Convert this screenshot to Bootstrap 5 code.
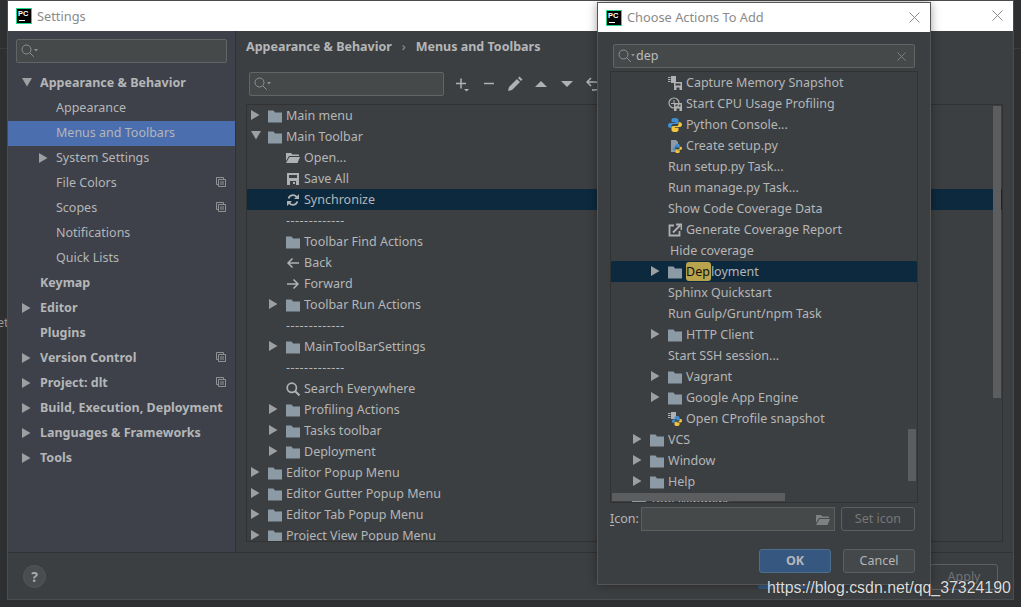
<!DOCTYPE html>
<html lang="en">
<head>
<meta charset="UTF-8">
<title>Settings</title>
<link href="https://cdn.jsdelivr.net/npm/bootstrap@5.3.0/dist/css/bootstrap.min.css" rel="stylesheet">
<style>
body { width: 1021px; height: 607px; overflow: hidden; background: #2e2f30; color: #b4b6b8; font: 12.5px/1 "Noto Sans", sans-serif; position: relative; }
svg { display: block; flex: none; }
.desk-line { height: 1px; background: #3a3b3c; }
.desk-text { position: absolute; left: -3px; top: 317px; color: #999; }
.win { position: absolute; background: #3c3f41; box-shadow: 0 0 0 1px #4a4c4e; }
.win-settings { left: 8px; top: 1px; width: 1005px; height: 598px; }
.win-dialog { left: 598px; top: 3px; width: 332px; height: 581px; box-shadow: 0 0 0 1px #555, 0 0 10px rgba(0,0,0,.45); }
.titlebar { background: #fff; color: #8a8a8a; font-size: 12.8px; }
.titlebar-s { height: 30px; padding-left: 8px; }
.titlebar-d { height: 29px; padding-left: 8px; }
.pc-logo { width: 16px; height: 16px; background: #000; border: 1px solid #21d789; color: #fff; font: bold 7.5px/8px "Liberation Sans", sans-serif; padding: 1px 0 0 1px; position: relative; margin-right: 5px; flex: none; }
.pc-logo::after { content: ""; position: absolute; left: 2px; bottom: 2px; width: 6px; height: 1px; background: #fff; }
.win-x { position: absolute; top: 9px; }
.side { width: 228px; background: #3e4149; border-right: 1px solid #323232; padding-top: 8px; flex: none; }
.side-search { margin: 0 8px 8px; height: 24px; }
.field { background: #45494a; border: 1px solid #646464; border-radius: 2px; padding-left: 4px; }
.side-row { height: 25px; position: relative; white-space: nowrap; }
.side-row.on { background: #4b6eaf; }
.side-row b { font-weight: 700; }
.lvl0 { padding-left: 32px; }
.lvl1 { padding-left: 48px; }
.side-row .arrow { position: absolute; left: 14px; top: 7px; }
.side-row.lvl1 .arrow { left: 31px; }
.side-copy { position: absolute; right: 9px; top: 6px; }
.panel { flex: 1; min-width: 0; position: relative; }
.crumb { height: 41px; padding: 10px 0 0 10px; font-weight: 700; }
.crumb i { font-style: normal; font-weight: 400; margin: 0 10px; color: #999; }
.tools { height: 32px; margin-left: 13px; }
.tool-search { width: 195px; height: 24px; margin-right: 6px; }
.tool-btn { width: 26px; display: flex; justify-content: center; }
.tree { border: 1px solid #323232; overflow: hidden; position: relative; }
.tree-main { margin: 0 10px 0 10px; height: 438px; }
.tree-row { height: 21px; position: relative; white-space: nowrap; padding-top: 2px; }
.tree-row.on { background: #0d293e; }
.t0, .t1, .t2 { display: flex; align-items: center; }
.tree-main .t0 { padding-left: 21px; }
.tree-main .t1 { padding-left: 39px; }
.tree-row svg.ic { margin: -2px 4px 0 0; width: 14px; height: 14px; }
.tree-row .arrow { position: absolute; top: 5px; }
.tree-main .t0 .arrow { left: 4px; }
.tree-main .t1 .arrow { left: 22px; }
.tree-list .t0 { padding-left: 21px; }
.tree-list .t1 { padding-left: 39px; }
.tree-list .t2 { padding-left: 57px; }
.tree-list .t1 .arrow { left: 22px; }
.tree-list .t0 .arrow { left: 4px; }
.tree-list .t2 .arrow { left: 40px; }
.tree-list .hide-txt { margin-left: 2px; }
.hit { background: #b9a34d; color: #111; border-radius: 3px; padding: 1px 1px 1px 0; }
.sep { letter-spacing: .5px; }
.thumb { position: absolute; background: #5b5d5f; }
.thumb-main { right: 1px; top: 1px; width: 8px; height: 292px; }
.foot { height: 47px; border-top: 1px solid #323232; position: relative; }
.help { position: absolute; left: 15px; top: 12px; width: 23px; height: 23px; border-radius: 50%; background: #4a4d4f; border: 1px solid #555; color: #aaa; font-weight: 700; font-size: 14px; }
.btn-idea { border: 1px solid #5e6060; border-radius: 3px; background: #3c3f41; color: #b4b6b8; font-size: 12.5px; padding-top: 1px; }
.apply { position: absolute; left: 922px; top: 11px; width: 68px; height: 26px; color: #6f7274; }
.ok-under { position: absolute; left: 750px; top: 32px; width: 72px; height: 4px; background: #365880; border-radius: 3px; }
.dlg-search { margin: 12px 15px 3px; height: 24px; position: relative; color: #bbb; }
.dlg-search .glass { margin-right: 1px; }
.tree-list { margin: 0 12px 0 12px; height: 432px; }
.thumb-v { right: 1px; top: 357px; width: 8px; height: 52px; }
.thumb-h { left: 1px; top: 421px; width: 173px; height: 8px; }
.icon-row { margin: 4px 15px 0 12px; height: 24px; }
.icon-lbl u { text-underline-offset: 2px; }
.icon-field { width: 194px; height: 24px; margin: 0 6px 0 2px; background: #45494a; border: 1px solid #5e6060; position: relative; }
.icon-field svg { position: absolute; right: 4px; top: 5px; opacity: .55; }
.set-icon { width: 74px; height: 24px; color: #777; }
.dlg-btns { margin: 18px 15px 0 0; gap: 12px; }
.dlg-btns .btn-idea { width: 72px; height: 24px; }
.btn-ok { background: #365880; border-color: #4c708c; font-weight: 700; }
.btn-cancel { background: #45484a; }
.watermark { position: absolute; left: 767px; top: 579px; color: #dcdcdc; font: 15.9px/18px "Liberation Sans", sans-serif; text-shadow: 0 0 1px #222; white-space: nowrap; }
</style>
</head>
<body>
<svg width="0" height="0" class="position-absolute">
  <symbol id="i-arrow-r" viewBox="0 0 9 10"><path d="M0 0l8.500 5L0 10z" fill="#9da0a2"/></symbol>
  <symbol id="i-arrow-d" viewBox="0 0 10 9"><path d="M0 0h10L5 8.500z" fill="#9da0a2"/></symbol>
  <symbol id="i-folder" viewBox="0 0 14 14"><path d="M0 1.500h5.500l1.500 2h7v10H0z" fill="#8c9aa5"/></symbol>
  <symbol id="i-open" viewBox="0 0 14 14"><path d="M0 2h5l1.500 1.500H13V5H3L0 10z" fill="#afb1b3"/><path d="M3.500 6H14l-2.500 6H0z" fill="#afb1b3"/></symbol>
  <symbol id="i-save" viewBox="0 0 14 14"><path fill-rule="evenodd" d="M1 1h12v12H1zM3 3v3h8V3zM4 9v4h6V9zM7 10h2v2H7z" fill="#afb1b3"/></symbol>
  <symbol id="i-sync" viewBox="0 0 14 14"><path d="M2.600 5.500A4.600 4.600 0 0 1 11 4.500M11.400 8.500A4.600 4.600 0 0 1 3 9.500" fill="none" stroke="#afb1b3" stroke-width="1.800"/><path d="M13 1v5H8zM1 13V8h5z" fill="#afb1b3"/></symbol>
  <symbol id="i-back" viewBox="0 0 14 14"><path d="M13 7H2M6.500 2.500L2 7l4.500 4.500" fill="none" stroke="#afb1b3" stroke-width="1.500"/></symbol>
  <symbol id="i-fwd" viewBox="0 0 14 14"><path d="M1 7h11M7.500 2.500L12 7l-4.500 4.500" fill="none" stroke="#afb1b3" stroke-width="1.500"/></symbol>
  <symbol id="i-find" viewBox="0 0 14 14"><circle cx="5.800" cy="5.800" r="4.600" fill="none" stroke="#afb1b3" stroke-width="1.700"/><path d="M9 9l4.500 4.500" stroke="#afb1b3" stroke-width="2"/></symbol>
  <symbol id="i-search" viewBox="0 0 17 14"><circle cx="5.500" cy="5.500" r="4.500" fill="none" stroke="#8f9294"/><path d="M8.800 8.800l4 4" stroke="#8f9294"/><path d="M13 5h4l-2 2.500z" fill="#8f9294"/></symbol>
  <symbol id="i-copy" viewBox="0 0 10 10"><path d="M0.500 0.500h7v2M0.500 0.500v7h2" fill="none" stroke="#8f9294"/><path d="M2.500 2.500h7v7h-7zM4 5h4M4 7h4" fill="none" stroke="#8f9294"/></symbol>
  <symbol id="i-close" viewBox="0 0 11 11"><path d="M.5.500l10 10M10.500.500l-10 10" stroke="#8a8a8a"/></symbol>
  <symbol id="i-py" viewBox="0 0 10 10"><path d="M5 0C2.500 0 2.500 1 2.500 2v1h2.700v.5H1.500C.5 3.500 0 4.300 0 5.300c0 1 .5 1.700 1.500 1.700h1V5.800c0-.9.700-1.500 1.500-1.500h2.200c.7 0 1.300-.6 1.300-1.300V1.500C7.500.5 6.500 0 5 0z" fill="#3f8fd2"/><path d="M5 10c2.500 0 2.500-1 2.500-2V7H4.800v-.5h3.700c1 0 1.500-.8 1.500-1.800 0-1-.5-1.700-1.500-1.700h-1v1.200c0 .9-.7 1.500-1.500 1.500H3.800c-.7 0-1.300.6-1.300 1.300v1.500C2.500 9.500 3.500 10 5 10z" fill="#f2c53d"/></symbol>
  <symbol id="i-floppy" viewBox="0 0 8 8"><path fill-rule="evenodd" d="M0 0h8v8H0zM1.500 1.500v2h5v-2zM2.500 5.500V8h3V5.500z" fill="#afb1b3"/></symbol>
  <symbol id="i-chip" viewBox="0 0 10 9"><path d="M3 0h5v7H3zM0 1h2.500v1H0zM0 3h2.500v1H0zM0 5h2.500v1H0z" fill="#afb1b3"/></symbol>
  <symbol id="i-report" viewBox="0 0 14 14"><path d="M6 2.500H1.500v10h10V8" fill="none" stroke="#afb1b3" stroke-width="1.800"/><path d="M5 9.500L12 2.500M8 1.500h5.500V7" fill="none" stroke="#afb1b3" stroke-width="1.800"/></symbol>
</svg>

<div class="desk-line mt-5"></div>
<div class="desk-text">et</div>

<!-- Settings window -->
<div class="win win-settings d-flex flex-column">
  <div class="titlebar titlebar-s d-flex align-items-center">
    <div class="pc-logo">PC</div>Settings
    <svg class="win-x" style="left:984px" width="11" height="11"><use href="#i-close"/></svg>
  </div>
  <div class="d-flex flex-grow-1">
    <div class="side">
      <div class="field side-search d-flex align-items-center"><svg width="17" height="14"><use href="#i-search"/></svg></div>
      <div class="side-row lvl0 d-flex align-items-center"><svg class="arrow" width="10" height="9"><use href="#i-arrow-d"/></svg><b>Appearance &amp; Behavior</b></div>
      <div class="side-row lvl1 d-flex align-items-center">Appearance</div>
      <div class="side-row lvl1 d-flex align-items-center on">Menus and Toolbars</div>
      <div class="side-row lvl1 d-flex align-items-center"><svg class="arrow" width="9" height="10"><use href="#i-arrow-r"/></svg>System Settings</div>
      <div class="side-row lvl1 d-flex align-items-center">File Colors<svg class="side-copy" width="10" height="10"><use href="#i-copy"/></svg></div>
      <div class="side-row lvl1 d-flex align-items-center">Scopes<svg class="side-copy" width="10" height="10"><use href="#i-copy"/></svg></div>
      <div class="side-row lvl1 d-flex align-items-center">Notifications</div>
      <div class="side-row lvl1 d-flex align-items-center">Quick Lists</div>
      <div class="side-row lvl0 d-flex align-items-center"><b>Keymap</b></div>
      <div class="side-row lvl0 d-flex align-items-center"><svg class="arrow" width="9" height="10"><use href="#i-arrow-r"/></svg><b>Editor</b></div>
      <div class="side-row lvl0 d-flex align-items-center"><b>Plugins</b></div>
      <div class="side-row lvl0 d-flex align-items-center"><svg class="arrow" width="9" height="10"><use href="#i-arrow-r"/></svg><b>Version Control</b><svg class="side-copy" width="10" height="10"><use href="#i-copy"/></svg></div>
      <div class="side-row lvl0 d-flex align-items-center"><svg class="arrow" width="9" height="10"><use href="#i-arrow-r"/></svg><b>Project: dlt</b><svg class="side-copy" width="10" height="10"><use href="#i-copy"/></svg></div>
      <div class="side-row lvl0 d-flex align-items-center"><svg class="arrow" width="9" height="10"><use href="#i-arrow-r"/></svg><b>Build, Execution, Deployment</b></div>
      <div class="side-row lvl0 d-flex align-items-center"><svg class="arrow" width="9" height="10"><use href="#i-arrow-r"/></svg><b>Languages &amp; Frameworks</b></div>
      <div class="side-row lvl0 d-flex align-items-center"><svg class="arrow" width="9" height="10"><use href="#i-arrow-r"/></svg><b>Tools</b></div>
    </div>
    <div class="panel">
      <div class="crumb">Appearance &amp; Behavior<i>›</i>Menus and Toolbars</div>
      <div class="tools d-flex align-items-start">
        <div class="field tool-search d-flex align-items-center"><svg width="17" height="14"><use href="#i-search"/></svg></div>
        <div class="tool-btn pt-1"><svg width="16" height="16" viewBox="0 0 16 16"><path d="M1 7.500h10M6 2.500v10" stroke="#afb1b3" stroke-width="1.500"/><path d="M9 13h5l-2.500 2.500z" fill="#afb1b3"/></svg></div>
        <div class="tool-btn pt-1"><svg width="14" height="16" viewBox="0 0 14 16"><path d="M2 7.500h10" stroke="#afb1b3" stroke-width="1.500"/></svg></div>
        <div class="tool-btn pt-1"><svg width="16" height="16" viewBox="0 0 16 16"><path d="M1 15l1-4 8-8 3 3-8 8zM11 2l1.500-1.500 3 3L14 5z" fill="#afb1b3"/></svg></div>
        <div class="tool-btn pt-1"><svg width="14" height="16" viewBox="0 0 14 16"><path d="M1 11l6-6 6 6z" fill="#afb1b3"/></svg></div>
        <div class="tool-btn pt-1"><svg width="14" height="16" viewBox="0 0 14 16"><path d="M1 5l6 6 6-6z" fill="#afb1b3"/></svg></div>
        <div class="tool-btn pt-1"><svg width="14" height="16" viewBox="0 0 14 16"><path d="M5 2L1 6l4 4M1 6h8a4 4 0 0 1 0 8H6" fill="none" stroke="#afb1b3" stroke-width="1.500"/></svg></div>
      </div>
      <div class="tree tree-main">
        <div class="tree-row t0"><svg class="arrow" width="9" height="10"><use href="#i-arrow-r"/></svg><svg class="ic"><use href="#i-folder"/></svg>Main menu</div>
        <div class="tree-row t0"><svg class="arrow" width="10" height="9"><use href="#i-arrow-d"/></svg><svg class="ic"><use href="#i-folder"/></svg>Main Toolbar</div>
        <div class="tree-row t1"><svg class="ic"><use href="#i-open"/></svg>Open...</div>
        <div class="tree-row t1"><svg class="ic"><use href="#i-save"/></svg>Save All</div>
        <div class="tree-row t1 on"><svg class="ic"><use href="#i-sync"/></svg>Synchronize</div>
        <div class="tree-row t1 sep">-------------</div>
        <div class="tree-row t1"><svg class="ic"><use href="#i-folder"/></svg>Toolbar Find Actions</div>
        <div class="tree-row t1"><svg class="ic"><use href="#i-back"/></svg>Back</div>
        <div class="tree-row t1"><svg class="ic"><use href="#i-fwd"/></svg>Forward</div>
        <div class="tree-row t1"><svg class="arrow" width="9" height="10"><use href="#i-arrow-r"/></svg><svg class="ic"><use href="#i-folder"/></svg>Toolbar Run Actions</div>
        <div class="tree-row t1 sep">-------------</div>
        <div class="tree-row t1"><svg class="arrow" width="9" height="10"><use href="#i-arrow-r"/></svg><svg class="ic"><use href="#i-folder"/></svg>MainToolBarSettings</div>
        <div class="tree-row t1 sep">-------------</div>
        <div class="tree-row t1"><svg class="ic"><use href="#i-find"/></svg>Search Everywhere</div>
        <div class="tree-row t1"><svg class="arrow" width="9" height="10"><use href="#i-arrow-r"/></svg><svg class="ic"><use href="#i-folder"/></svg>Profiling Actions</div>
        <div class="tree-row t1"><svg class="arrow" width="9" height="10"><use href="#i-arrow-r"/></svg><svg class="ic"><use href="#i-folder"/></svg>Tasks toolbar</div>
        <div class="tree-row t1"><svg class="arrow" width="9" height="10"><use href="#i-arrow-r"/></svg><svg class="ic"><use href="#i-folder"/></svg>Deployment</div>
        <div class="tree-row t0"><svg class="arrow" width="9" height="10"><use href="#i-arrow-r"/></svg><svg class="ic"><use href="#i-folder"/></svg>Editor Popup Menu</div>
        <div class="tree-row t0"><svg class="arrow" width="9" height="10"><use href="#i-arrow-r"/></svg><svg class="ic"><use href="#i-folder"/></svg>Editor Gutter Popup Menu</div>
        <div class="tree-row t0"><svg class="arrow" width="9" height="10"><use href="#i-arrow-r"/></svg><svg class="ic"><use href="#i-folder"/></svg>Editor Tab Popup Menu</div>
        <div class="tree-row t0"><svg class="arrow" width="9" height="10"><use href="#i-arrow-r"/></svg><svg class="ic"><use href="#i-folder"/></svg>Project View Popup Menu</div>
        <div class="thumb thumb-main"></div>
      </div>
    </div>
  </div>
  <div class="foot">
    <div class="help d-flex align-items-center justify-content-center">?</div>
    <div class="ok-under"></div>
    <div class="btn-idea apply d-flex align-items-center justify-content-center">Apply</div>
  </div>
</div>

<!-- Choose Actions dialog -->
<div class="win win-dialog d-flex flex-column">
  <div class="titlebar titlebar-d d-flex align-items-center">
    <div class="pc-logo">PC</div>Choose Actions To Add
    <svg class="win-x" style="left:311px" width="11" height="11"><use href="#i-close"/></svg>
  </div>
  <div class="field dlg-search d-flex align-items-center"><svg class="glass" width="17" height="14"><use href="#i-search"/></svg>dep
    <svg class="position-absolute" style="right:8px;top:7px" width="9" height="9" viewBox="0 0 11 11"><use href="#i-close"/></svg>
  </div>
  <div class="tree tree-list">
    <div class="tree-row t2"><svg class="ic" viewBox="0 0 14 14"><use href="#i-chip" width="10" height="9" x="0"/><use href="#i-floppy" width="8" height="8" x="6" y="6"/></svg>Capture Memory Snapshot</div>
    <div class="tree-row t2"><svg class="ic" viewBox="0 0 14 14"><circle cx="6" cy="6" r="5" fill="none" stroke="#afb1b3" stroke-width="1.200"/><path d="M6 3v3.500H3" fill="none" stroke="#afb1b3"/><use href="#i-floppy" width="8" height="8" x="6" y="6"/></svg>Start CPU Usage Profiling</div>
    <div class="tree-row t2"><svg class="ic"><use href="#i-py"/></svg>Python Console...</div>
    <div class="tree-row t2"><svg class="ic" viewBox="0 0 14 14"><path d="M3 1h5l2 2v4H7v6H3z" fill="#8c9aa5"/><use href="#i-py" width="9" height="9" x="5" y="5"/></svg>Create setup.py</div>
    <div class="tree-row t2">Run setup.py Task...</div>
    <div class="tree-row t2">Run manage.py Task...</div>
    <div class="tree-row t2">Show Code Coverage Data</div>
    <div class="tree-row t2"><svg class="ic"><use href="#i-report"/></svg>Generate Coverage Report</div>
    <div class="tree-row t2"><span class="hide-txt">Hide coverage</span></div>
    <div class="tree-row t2 on"><svg class="arrow" width="9" height="10"><use href="#i-arrow-r"/></svg><svg class="ic"><use href="#i-folder"/></svg><span><span class="hit">Dep</span>loyment</span></div>
    <div class="tree-row t2">Sphinx Quickstart</div>
    <div class="tree-row t2">Run Gulp/Grunt/npm Task</div>
    <div class="tree-row t2"><svg class="arrow" width="9" height="10"><use href="#i-arrow-r"/></svg><svg class="ic"><use href="#i-folder"/></svg>HTTP Client</div>
    <div class="tree-row t2">Start SSH session...</div>
    <div class="tree-row t2"><svg class="arrow" width="9" height="10"><use href="#i-arrow-r"/></svg><svg class="ic"><use href="#i-folder"/></svg>Vagrant</div>
    <div class="tree-row t2"><svg class="arrow" width="9" height="10"><use href="#i-arrow-r"/></svg><svg class="ic"><use href="#i-folder"/></svg>Google App Engine</div>
    <div class="tree-row t2"><svg class="ic" viewBox="0 0 14 14"><use href="#i-chip" width="10" height="9" x="0"/><use href="#i-py" width="10" height="10" x="4" y="4"/></svg>Open CProfile snapshot</div>
    <div class="tree-row t1"><svg class="arrow" width="9" height="10"><use href="#i-arrow-r"/></svg><svg class="ic"><use href="#i-folder"/></svg>VCS</div>
    <div class="tree-row t1"><svg class="arrow" width="9" height="10"><use href="#i-arrow-r"/></svg><svg class="ic"><use href="#i-folder"/></svg>Window</div>
    <div class="tree-row t1"><svg class="arrow" width="9" height="10"><use href="#i-arrow-r"/></svg><svg class="ic"><use href="#i-folder"/></svg>Help</div>
    <div class="tree-row t0"><svg class="ic"><use href="#i-folder"/></svg>Tool Windows</div>
    <div class="thumb thumb-v"></div>
    <div class="thumb thumb-h"></div>
  </div>
  <div class="icon-row d-flex align-items-center">
    <span class="icon-lbl"><u>I</u>con:</span>
    <div class="icon-field"><svg width="14" height="14"><use href="#i-open"/></svg></div>
    <div class="btn-idea set-icon d-flex align-items-center justify-content-center">Set icon</div>
  </div>
  <div class="dlg-btns d-flex justify-content-end">
    <div class="btn-idea btn-ok d-flex align-items-center justify-content-center">OK</div>
    <div class="btn-idea btn-cancel d-flex align-items-center justify-content-center">Cancel</div>
  </div>
</div>

<div class="watermark">https://blog.csdn.net/qq_37324190</div>
<script src="https://cdn.jsdelivr.net/npm/bootstrap@5.3.0/dist/js/bootstrap.bundle.min.js"></script>
</body>
</html>
